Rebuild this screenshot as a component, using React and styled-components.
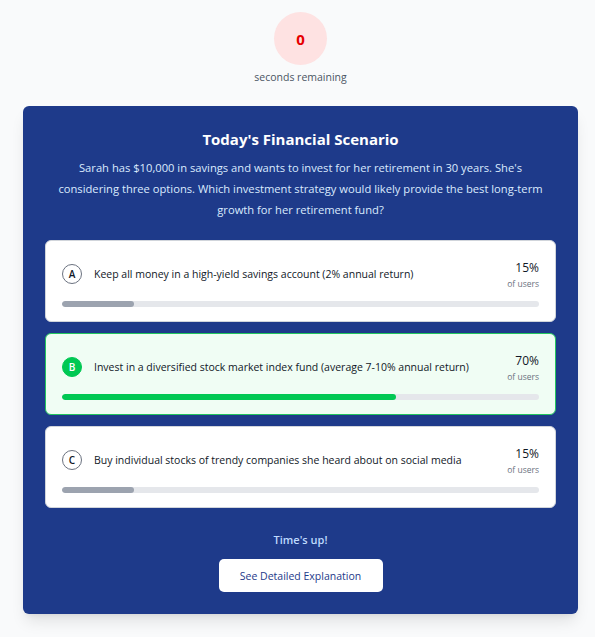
import styled, { createGlobalStyle } from "styled-components";

const options = [
  { key: "A", text: "Keep all money in a high-yield savings account (2% annual return)", pct: 15 },
  { key: "B", text: "Invest in a diversified stock market index fund (average 7-10% annual return)", pct: 70, correct: true },
  { key: "C", text: "Buy individual stocks of trendy companies she heard about on social media", pct: 15 },
];

export default function App() {
  return (
    <>
      <GlobalStyle />
      <Page>
        <TimerBlock>
          <TimerCircle>0</TimerCircle>
          <TimerLabel>seconds remaining</TimerLabel>
        </TimerBlock>
        <Card>
          <Title>Today's Financial Scenario</Title>
          <Description>
            Sarah has $10,000 in savings and wants to invest for her retirement in 30 years. She's
            considering three options. Which investment strategy would likely provide the best long-term
            growth for her retirement fund?
          </Description>
          <OptionList>
            {options.map((o) => (
              <Option key={o.key} $correct={o.correct}>
                <OptionTop>
                  <Letter $correct={o.correct}>{o.key}</Letter>
                  <OptionText>{o.text}</OptionText>
                  <Stat>
                    <Pct>{o.pct}%</Pct>
                    <Users>of users</Users>
                  </Stat>
                </OptionTop>
                <Track>
                  <Fill $correct={o.correct} style={{ width: `${o.pct}%` }} />
                </Track>
              </Option>
            ))}
          </OptionList>
          <Footer>
            <TimesUp>Time's up!</TimesUp>
            <ExplainButton>See Detailed Explanation</ExplainButton>
          </Footer>
        </Card>
      </Page>
    </>
  );
}

const GlobalStyle = createGlobalStyle`
  body {
    margin: 0;
    background: #f9fafb;
    font-family: "Open Sans", "Noto Sans", sans-serif;
  }
`;

const Page = styled.div`
  width: 595px;
  min-height: 637px;
  padding: 12px 0 0 6px;
  box-sizing: border-box;
  display: flex;
  flex-direction: column;
  align-items: center;
`;

const TimerBlock = styled.div`
  display: flex;
  flex-direction: column;
  align-items: center;
  gap: 5px;
  margin-bottom: 22px;
`;

const TimerCircle = styled.div`
  width: 53px;
  height: 53px;
  border-radius: 50%;
  background: #fee2e2;
  color: #e60000;
  font-weight: 700;
  font-size: 15px;
  display: flex;
  align-items: center;
  justify-content: center;
`;

const TimerLabel = styled.div`
  font-size: 10.5px;
  color: #4b5563;
`;

const Card = styled.div`
  width: 555px;
  box-sizing: border-box;
  background: #1e3a8a;
  border-radius: 6px;
  padding: 22px;
  box-shadow: 0 10px 15px -3px rgba(0, 0, 0, 0.1), 0 4px 6px -4px rgba(0, 0, 0, 0.1);
  display: flex;
  flex-direction: column;
  align-items: center;
`;

const Title = styled.h2`
  margin: 1px 0 8px;
  color: #fff;
  font-size: 15px;
  font-weight: 700;
`;

const Description = styled.p`
  margin: 0 0 20px;
  color: #dbeafe;
  font-size: 11.2px;
  line-height: 21px;
  text-align: center;
  padding: 0 8px;
`;

const OptionList = styled.div`
  width: 100%;
  display: flex;
  flex-direction: column;
  gap: 11px;
`;

const Option = styled.div`
  background: ${(p) => (p.$correct ? "#f0fdf4" : "#fff")};
  border: 1px solid ${(p) => (p.$correct ? "#22c55e" : "#d1d5db")};
  border-radius: 6px;
  padding: 18px 16px 14px;
  display: flex;
  flex-direction: column;
  gap: 12px;
`;

const OptionTop = styled.div`
  display: flex;
  align-items: center;
  gap: 12px;
`;

const Letter = styled.div`
  width: 20px;
  height: 20px;
  flex-shrink: 0;
  box-sizing: border-box;
  border-radius: 50%;
  border: 1px solid ${(p) => (p.$correct ? "#00c853" : "#6b7280")};
  background: ${(p) => (p.$correct ? "#00c853" : "#fff")};
  color: ${(p) => (p.$correct ? "#fff" : "#111827")};
  font-size: 10px;
  font-weight: 600;
  display: flex;
  align-items: center;
  justify-content: center;
`;

const OptionText = styled.div`
  flex: 1;
  font-size: 10.5px;
  color: #111827;
`;

const Stat = styled.div`
  display: flex;
  flex-direction: column;
  align-items: flex-end;
  gap: 2px;
`;

const Pct = styled.div`
  font-size: 12px;
  font-weight: 500;
  color: #111827;
`;

const Users = styled.div`
  font-size: 8.5px;
  color: #6b7280;
`;

const Track = styled.div`
  height: 6px;
  border-radius: 3px;
  background: #e5e7eb;
  overflow: hidden;
`;

const Fill = styled.div`
  height: 100%;
  border-radius: 3px;
  background: ${(p) => (p.$correct ? "#00c853" : "#9ca3af")};
`;

const Footer = styled.div`
  margin-top: 24px;
  display: flex;
  flex-direction: column;
  align-items: center;
  gap: 12px;
`;

const TimesUp = styled.div`
  color: #bfdbfe;
  font-size: 11px;
  font-weight: 600;
`;

const ExplainButton = styled.button`
  width: 164px;
  height: 33px;
  background: #fff;
  border: none;
  border-radius: 5px;
  color: #1e3a8a;
  font-family: inherit;
  font-size: 10.5px;
  font-weight: 500;
  cursor: pointer;
`;
